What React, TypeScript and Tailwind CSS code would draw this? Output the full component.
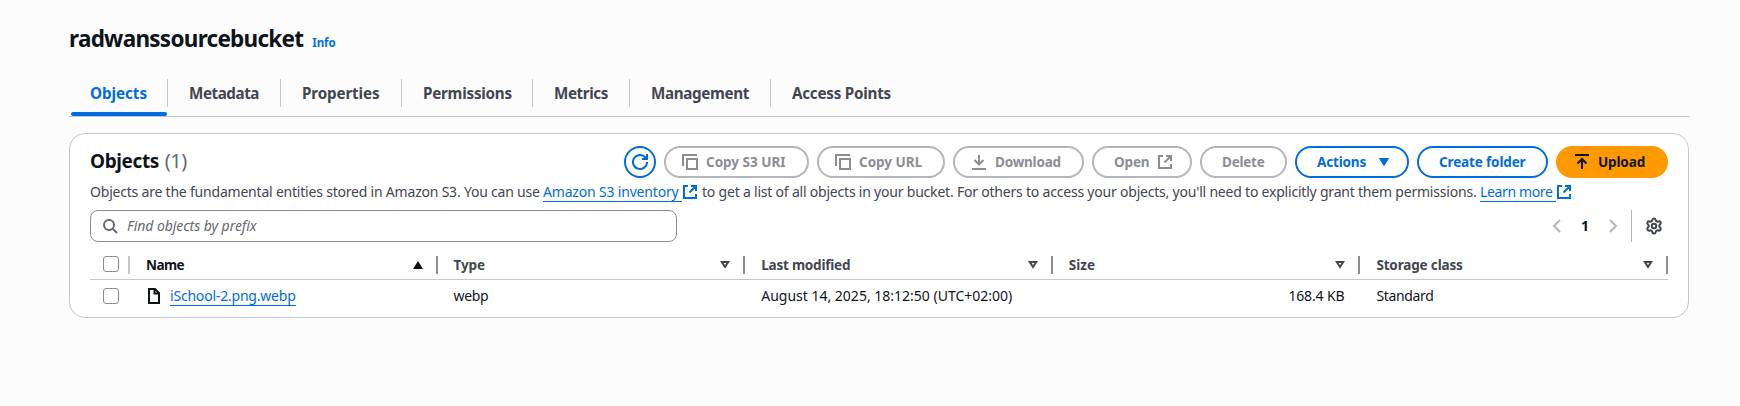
import type { ReactNode } from "react";
import { Settings } from "lucide-react";

function Icon({ children, className = "" }: { children: ReactNode; className?: string }) {
  return (
    <svg viewBox="0 0 16 16" className={`size-4 shrink-0 fill-none stroke-current stroke-2 ${className}`}>
      {children}
    </svg>
  );
}

const CopyIcon = () => (
  <Icon>
    <path d="M1 12V1h14M5 5h10v10H5z" />
  </Icon>
);
const ExternalIcon = ({ className = "" }: { className?: string }) => (
  <Icon className={className}>
    <path d="M6 2H2v12h12v-4M9 2h5v5M7.5 8.5 14 2" />
  </Icon>
);

const tabs = [
  { name: "Metadata", box: "w-[113px]", text: "tracking-[-0.44px]" },
  { name: "Properties", box: "w-[121px]", text: "tracking-[-0.13px]" },
  { name: "Permissions", box: "w-[131px]", text: "tracking-[-0.23px]" },
  { name: "Metrics", box: "w-[97px]", text: "tracking-[-0.4px]" },
  { name: "Management", box: "w-[141px]", text: "tracking-[-0.35px]" },
  { name: "Access Points", box: "w-[141px] border-r-0", text: "tracking-[-0.24px]" },
];

const columns = [
  { name: "Name", text: "tracking-[-0.57px] text-[#0f141a]", sorted: true },
  { name: "Type", text: "tracking-[-0.1px]" },
  { name: "Last modified", text: "tracking-[-0.21px]" },
  { name: "Size", text: "" },
  { name: "Storage class", text: "tracking-[-0.15px]" },
];

function Button({ children, className }: { children: ReactNode; className: string }) {
  return (
    <button className={`flex h-8 items-center gap-2 whitespace-nowrap rounded-full border-2 text-[13.5px] font-bold leading-5 ${className}`}>
      {children}
    </button>
  );
}

function Checkbox() {
  return <span className="ml-[13px] block size-4 rounded-[3px] border border-[#8c8c94] bg-white" />;
}

export default function App() {
  return (
    <main className="h-[406px] bg-[#fcfcfd] pl-[69px] pt-[23px] font-['Noto_Sans',sans-serif] text-[#0f141a]">
      <header className="flex h-8 items-baseline gap-[9px]">
        <h1 className="text-[22.5px] font-bold leading-8 tracking-[-0.73px]">radwanssourcebucket</h1>
        <a className="text-[11.5px] font-bold tracking-[-0.1px] text-[#006ce0]">Info</a>
      </header>

      <nav className="mt-4 flex h-[46px] w-[1620px] items-start border-b border-[#c6c6cd] pt-2 text-[15.2px] font-bold text-[#424650]">
        <div className="h-[38px] w-[99px]">
          <div className="flex h-7 items-center border-r border-[#c6c6cd] pl-[21px] tracking-[-0.04px] text-[#006ce0]">Objects</div>
          <div className="ml-0.5 mt-[5px] h-1 w-24 rounded-sm bg-[#006ce0]" />
        </div>
        {tabs.map((t) => (
          <div key={t.name} className={`flex h-7 items-center border-r border-[#c6c6cd] pl-[21px] ${t.box} ${t.text}`}>
            {t.name}
          </div>
        ))}
      </nav>

      <section className="mt-4 h-[185px] w-[1620px] rounded-2xl border border-[#c6c6cd] bg-white px-5 pt-3">
        <div className="flex h-8 items-center justify-between">
          <h2 className="pb-0.5 text-[19px] font-bold tracking-[-0.37px]">
            Objects <span className="ml-px text-xl font-normal text-[#656871]">(1)</span>
          </h2>
          <div className="flex gap-2">
            <Button className="w-8 justify-center border-[#006ce0] text-[#006ce0]">
              <Icon>
                <path d="M15 8a7 7 0 1 1-1.6-4.5L15 5M15 0v5h-5" />
              </Icon>
            </Button>
            <Button className="w-[145px] border-[#b4b4bb] pl-4 text-[#8c8c94]">
              <CopyIcon /> Copy S3 URI
            </Button>
            <Button className="w-32 border-[#b4b4bb] pl-4 text-[#8c8c94]">
              <CopyIcon /> Copy URL
            </Button>
            <Button className="w-[131px] border-[#b4b4bb] pl-4 tracking-[-0.19px] text-[#8c8c94]">
              <Icon>
                <path d="M1 15h14M8 1v10M3.500 6 8 10.500 12.500 6" />
              </Icon>
              Download
            </Button>
            <Button className="w-[100px] border-[#b4b4bb] pl-5 tracking-[-0.15px] text-[#8c8c94]">
              Open <ExternalIcon />
            </Button>
            <Button className="w-[87px] border-[#b4b4bb] pl-5 tracking-[-0.25px] text-[#8c8c94]">Delete</Button>
            <Button className="w-[114px] border-[#006ce0] pl-5 tracking-[-0.17px] text-[#006ce0]">
              Actions
              <svg viewBox="0 0 16 16" className="ml-0.5 size-4 shrink-0 fill-current">
                <path d="M2.800 4h10.400L8 12.500z" />
              </svg>
            </Button>
            <Button className="w-[131px] border-[#006ce0] pl-5 tracking-[-0.14px] text-[#006ce0]">Create folder</Button>
            <Button className="w-28 border-[#ff9900] bg-[#ff9900] pl-4 tracking-[-0.13px]">
              <Icon>
                <path d="M1 1h14M8 15V5M3.500 9.500 8 5l4.500 4.500" />
              </Icon>
              Upload
            </Button>
          </div>
        </div>

        <p className="mt-1 flex h-5 whitespace-pre text-sm tracking-[-0.207px] text-[#424650]">
          <span className="w-[453px]">Objects are the fundamental entities stored in Amazon S3. You can use </span>
          <a className="h-5 w-[139px] border-b border-[#006ce0] tracking-[-0.18px] text-[#006ce0]">Amazon S3 inventory</a>
          <ExternalIcon className="mt-0.5 text-[#006ce0]" />
          <span className="ml-1 w-[778px]">
            to get a list of all objects in your bucket. For others to access your objects, you'll need to explicitly grant them permissions.
          </span>
          <a className="h-5 w-[76px] border-b border-[#006ce0] tracking-[-0.36px] text-[#006ce0]">Learn more</a>
          <ExternalIcon className="mt-0.5 text-[#006ce0]" />
        </p>

        <div className="mt-2 flex h-8 items-center">
          <div className="flex h-8 w-[587px] items-center rounded-lg border border-[#8c8c94] pl-[11px]">
            <Icon className="text-[#656871]">
              <circle cx="7" cy="7" r="5" />
              <path d="m15 15-4.500-4.500" />
            </Icon>
            <span className="ml-[9px] text-sm italic tracking-[-0.05px] text-[#656871]">Find objects by prefix</span>
          </div>
          <Icon className="ml-[872px] text-[#b4b4bb]">
            <path d="m11 2-6 6 6 6" />
          </Icon>
          <span className="ml-4 text-sm font-bold">1</span>
          <Icon className="ml-4 text-[#b4b4bb]">
            <path d="m5 2 6 6-6 6" />
          </Icon>
          <span className="ml-2.5 h-8 w-px bg-[#b4b4bb]" />
          <Settings className="ml-[13px] size-[18px] text-[#424650]" strokeWidth={2.7} />
        </div>

        <table className="mt-2 w-[1578px] table-fixed border-separate border-spacing-0 text-sm">
          <thead>
            <tr className="h-[30px] text-left text-[13.5px] leading-5 text-[#424650]">
              <th className="w-10 border-b border-[#c6c6cd] p-0 pt-px">
                <span className="flex justify-between">
                  <Checkbox />
                  <span className="h-[18px] w-0.5 bg-[#c6c6cd]" />
                </span>
              </th>
              {columns.map((c) => (
                <th key={c.name} className="border-b border-[#c6c6cd] p-0 pl-4 pt-px font-bold">
                  <span className="flex items-center">
                    <span className={`flex-1 ${c.text}`}>{c.name}</span>
                    <svg viewBox="0 0 10 8" className="mr-[13px] h-2 w-2.5">
                      {c.sorted ? (
                        <path d="M0 8h10L5 0z" fill="#0f141a" />
                      ) : (
                        <path d="M1.800 1h6.400L5 6z" fill="none" stroke="#424650" strokeWidth="2" />
                      )}
                    </svg>
                    <span className="h-[18px] w-0.5 bg-[#8c8c94]" />
                  </span>
                </th>
              ))}
            </tr>
          </thead>
          <tbody>
            <tr className="h-8">
              <td className="p-0">
                <Checkbox />
              </td>
              <td className="p-0 pl-4">
                <span className="flex items-center">
                  <Icon>
                    <path d="M3 1h6l4 4v10H3zM8.500 1v4.500H13" />
                  </Icon>
                  <a className="ml-2 h-5 border-b border-[#006ce0] leading-5 tracking-[-0.2px] text-[#006ce0]">iSchool-2.png.webp</a>
                </span>
              </td>
              <td className="p-0 pl-4 tracking-[-0.4px]">webp</td>
              <td className="p-0 pl-4">August 14, 2025, 18:12:50 (UTC+02:00)</td>
              <td className="p-0 pr-4 text-right tracking-[-0.15px]">168.4 KB</td>
              <td className="p-0 pl-4 tracking-[-0.35px]">Standard</td>
            </tr>
          </tbody>
        </table>
      </section>
    </main>
  );
}
